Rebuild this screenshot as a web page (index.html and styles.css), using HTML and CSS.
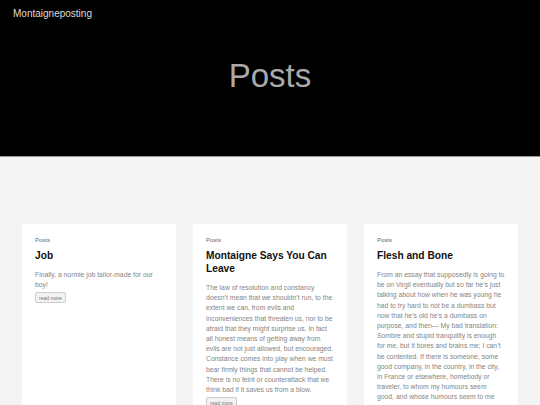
FILE: index.html
```html
<!DOCTYPE html>
<html lang="en">
<head>
    <meta charset="UTF-8">
    <meta name="viewport" content="width=device-width, initial-scale=1.0">
    <title>Posts - Montaigneposting</title>
    <link rel="stylesheet" href="styles.css">
</head>
<body>
    <!-- Header -->
    <header class="site-header">
        <a class="site-title" href="#">Montaigneposting</a>
        <h1 class="page-title">Posts</h1>
    </header>

    <!-- Post list -->
    <main class="post-list">
        <article class="post-card">
            <div class="post-section">Posts</div>
            <h2 class="post-title">Job</h2>
            <p class="post-summary">Finally, a normie job tailor-made for our boy!</p>
            <button class="read-more">read more</button>
        </article>

        <article class="post-card">
            <div class="post-section">Posts</div>
            <h2 class="post-title">Montaigne Says You Can Leave</h2>
            <p class="post-summary">The law of resolution and constancy doesn’t mean that we shouldn’t run, to the extent we can, from evils and inconveniences that threaten us, nor to be afraid that they might surprise us. In fact all honest means of getting away from evils are not just allowed, but encouraged. Constance comes into play when we must bear firmly things that cannot be helped. There is no feint or counterattack that we think bad if it saves us from a blow.</p>
            <button class="read-more">read more</button>
        </article>

        <article class="post-card">
            <div class="post-section">Posts</div>
            <h2 class="post-title">Flesh and Bone</h2>
            <p class="post-summary">From an essay that supposedly is going to be on Virgil eventually but so far he’s just talking about how when he was young he had to try hard to not be a dumbass but now that he’s old he’s a dumbass on purpose, and then— My bad translation: Sombre and stupid tranquility is enough for me, but it bores and brains me; I can’t be contented. If there is someone, some good company, in the country, in the city, in France or elsewhere, homebody or traveler, to whom my humours seem good, and whose humours seem to me good, let them whistle and I’ll be there.</p>
            <button class="read-more">read more</button>
        </article>
    </main>
</body>
</html>
```

FILE: styles.css
```css
/* styles.css */
body {
    margin: 0;
    padding: 0;
    font-family: "Liberation Sans", Arial, sans-serif;
    background-color: #f4f4f4;
}

.site-header {
    background-color: #000;
    border-bottom: 1px solid #999;
    height: 157px;
    padding: 8px 13px 0;
    box-sizing: border-box;
}

.site-title {
    display: block;
    color: #ddd;
    font-size: 10px;
    text-decoration: none;
}

.page-title {
    margin: 38px 0 0;
    text-align: center;
    font-size: 33px;
    font-weight: normal;
    color: #aaa;
}

.post-list {
    display: grid;
    grid-template-columns: repeat(3, 1fr);
    gap: 17px;
    padding: 67px 22px 0;
}

.post-card {
    background: #fff;
    padding: 13px 13px 20px;
}

.post-section {
    font-size: 6px;
    color: #666;
}

.post-title {
    margin: 6px 0 8px;
    font-size: 10.2px;
    line-height: 13px;
    color: #111;
}

.post-summary {
    margin: 0 0 2px;
    font-size: 6.8px;
    line-height: 10.2px;
    color: #858585;
}

.read-more {
    display: block;
    font-family: inherit;
    font-size: 5px;
    color: #777;
    background: #f2f2f2;
    border: 1px solid #ccc;
    border-radius: 2px;
    padding: 1.5px 3px;
}
```
